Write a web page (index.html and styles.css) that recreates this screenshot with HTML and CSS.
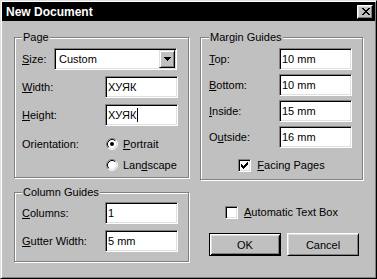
FILE: index.html
```html
<!DOCTYPE html>
<html>
<head>
<meta charset="utf-8">
<link rel="stylesheet" href="styles.css">
</head>
<body>
<div class="window">
  <div class="titlebar">
    <span class="title">New Document</span>
    <span class="close">
      <svg width="8" height="7" viewBox="0 0 8 7" shape-rendering="crispEdges"><path fill="#000" d="M0 0h2v1H0zM6 0h2v1H6zM1 1h2v1H1zM5 1h2v1H5zM2 2h4v1H2zM3 3h2v1H3zM2 4h4v1H2zM1 5h2v1H1zM5 5h2v1H5zM0 6h2v1H0zM6 6h2v1H6z"/></svg>
    </span>
  </div>
  <div class="content">
    <div class="col">
      <fieldset class="group group-left page">
        <legend>Page</legend>
        <div class="row">
          <span class="lbl lbl-size"><u>S</u>ize:</span>
          <div class="select">
            <span class="select-text">Custom</span>
            <span class="select-btn">
              <svg width="7" height="4" viewBox="0 0 7 4" shape-rendering="crispEdges"><path fill="#000" d="M0 0h7v1H0zM1 1h5v1H1zM2 2h3v1H2zM3 3h1v1H3z"/></svg>
            </span>
          </div>
        </div>
        <div class="row">
          <span class="lbl lbl-left"><u>W</u>idth:</span>
          <div class="field">ХУЯК</div>
        </div>
        <div class="row">
          <span class="lbl lbl-left"><u>H</u>eight:</span>
          <div class="field">ХУЯК<span class="caret"></span></div>
        </div>
        <div class="row radio-row first-radio">
          <span class="lbl lbl-left">Orientation:</span>
          <span class="radio">
            <svg width="12" height="12" viewBox="0 0 12 12"><circle cx="6" cy="6" r="4.5" fill="#fff"/><path d="M2.11 9.89A5.5 5.5 0 0 1 9.89 2.11" fill="none" stroke="#808080"/><path d="M9.89 2.11A5.5 5.5 0 0 1 2.11 9.89" fill="none" stroke="#fff"/><path d="M2.82 9.18A4.5 4.5 0 0 1 9.18 2.82" fill="none" stroke="#000"/><path d="M9.18 2.82A4.5 4.5 0 0 1 2.82 9.18" fill="none" stroke="#dfdfdf"/><circle cx="6" cy="6" r="2" fill="#000"/></svg>
          </span>
          <span class="opt"><u>P</u>ortrait</span>
        </div>
        <div class="row radio-row">
          <span class="lbl lbl-left"></span>
          <span class="radio">
            <svg width="12" height="12" viewBox="0 0 12 12"><circle cx="6" cy="6" r="4.5" fill="#fff"/><path d="M2.11 9.89A5.5 5.5 0 0 1 9.89 2.11" fill="none" stroke="#808080"/><path d="M9.89 2.11A5.5 5.5 0 0 1 2.11 9.89" fill="none" stroke="#fff"/><path d="M2.82 9.18A4.5 4.5 0 0 1 9.18 2.82" fill="none" stroke="#000"/><path d="M9.18 2.82A4.5 4.5 0 0 1 2.82 9.18" fill="none" stroke="#dfdfdf"/></svg>
          </span>
          <span class="opt">Lan<u>d</u>scape</span>
        </div>
      </fieldset>
      <fieldset class="group group-left cols">
        <legend>Column Guides</legend>
        <div class="row">
          <span class="lbl lbl-left"><u>C</u>olumns:</span>
          <div class="field">1</div>
        </div>
        <div class="row">
          <span class="lbl lbl-left"><u>G</u>utter Width:</span>
          <div class="field">5 mm</div>
        </div>
      </fieldset>
    </div>
    <div class="col">
      <fieldset class="group group-right margins">
        <legend>Margin Guides</legend>
        <div class="row">
          <span class="lbl lbl-right"><u>T</u>op:</span>
          <div class="field">10 mm</div>
        </div>
        <div class="row">
          <span class="lbl lbl-right"><u>B</u>ottom:</span>
          <div class="field">10 mm</div>
        </div>
        <div class="row">
          <span class="lbl lbl-right"><u>I</u>nside:</span>
          <div class="field">15 mm</div>
        </div>
        <div class="row">
          <span class="lbl lbl-right">O<u>u</u>tside:</span>
          <div class="field">16 mm</div>
        </div>
        <div class="check-row facing">
          <span class="checkbox">
            <svg width="7" height="7" viewBox="0 0 7 7" shape-rendering="crispEdges"><path fill="#000" d="M6 0h1v1H6zM5 1h2v1H5zM0 2h1v1H0zM4 2h3v1H4zM0 3h2v1H0zM3 3h3v1H3zM0 4h5v1H0zM1 5h3v1H1zM2 6h1v1H2z"/></svg>
          </span>
          <span class="opt"><u>F</u>acing Pages</span>
        </div>
      </fieldset>
      <div class="check-row auto">
        <span class="checkbox"></span>
        <span class="opt"><u>A</u>utomatic Text Box</span>
      </div>
      <div class="buttons">
        <span class="btn btn-default">OK</span>
        <span class="btn">Cancel</span>
      </div>
    </div>
  </div>
</div>
</body>
</html>
```
FILE: styles.css
```css
* {
  box-sizing: border-box;
}

html,
body {
  margin: 0;
  padding: 0;
}

body {
  background: #c0c0c0;
  font-family: "Liberation Sans", Arial, sans-serif;
  font-size: 11px;
  color: #000;
}

u {
  text-decoration: underline;
  text-underline-offset: 1px;
}

.window {
  width: 377px;
  height: 279px;
  background: #c0c0c0;
  border: 1px solid;
  border-color: #dfdfdf #000 #000 #dfdfdf;
  box-shadow: inset 1px 1px #fff, inset -1px -1px #808080;
  padding: 1px;
  display: flex;
  flex-direction: column;
}

.titlebar {
  height: 19px;
  background: #000;
  display: flex;
  align-items: center;
  justify-content: space-between;
  padding: 0 2px 0 4px;
}

.title {
  color: #fff;
  font-weight: bold;
  font-size: 12px;
  line-height: 14px;
}

.close {
  width: 16px;
  height: 14px;
  background: #c0c0c0;
  border: 1px solid;
  border-color: #fff #000 #000 #fff;
  box-shadow: inset -1px -1px #808080, inset 1px 1px #dfdfdf;
  display: flex;
  align-items: center;
  justify-content: center;
  padding-left: 1px;
}

.close svg {
  display: block;
}

.content {
  display: grid;
  grid-template-columns: 175px 163px;
  column-gap: 11px;
  padding: 10px 0 0 12px;
}

.col {
  display: flex;
  flex-direction: column;
}

.group {
  margin: 0;
  min-width: 0;
  border: 1px solid #808080;
  box-shadow: inset 1px 1px #fff, 1px 1px #fff;
}

.group legend {
  padding: 0 1px;
  line-height: 13px;
  background: #c0c0c0;
}

.group-left {
  padding: 4px 0 0 7px;
}

.group-right {
  padding: 4px 0 0 8px;
}

.page {
  padding-bottom: 4px;
}

.cols {
  margin-top: 8px;
  padding-top: 3px;
  padding-bottom: 9px;
}

.margins {
  padding-bottom: 7px;
}

.row {
  display: flex;
  align-items: center;
  height: 22px;
}

.row + .row {
  margin-top: 6px;
}

.margins .row + .row {
  margin-top: 4px;
}

.lbl {
  flex: none;
  white-space: nowrap;
}

.lbl-size {
  width: 32px;
}

.lbl-left {
  width: 83px;
}

.lbl-right {
  width: 70px;
}

.field {
  width: 73px;
  height: 22px;
  background: #fff;
  border: 1px solid;
  border-color: #808080 #fff #fff #808080;
  box-shadow: inset 1px 1px #000, inset -1px -1px #dfdfdf;
  padding: 0 2px;
  display: flex;
  align-items: center;
  white-space: nowrap;
}

.caret {
  display: inline-block;
  width: 1px;
  height: 14px;
  background: #000;
  margin-left: 1px;
}

.select {
  width: 123px;
  height: 22px;
  background: #fff;
  border: 1px solid;
  border-color: #808080 #fff #fff #808080;
  box-shadow: inset 1px 1px #000, inset -1px -1px #dfdfdf;
  padding: 1px 1px 1px 1px;
  display: flex;
  align-items: center;
}

.select-text {
  flex: 1;
  padding-left: 3px;
}

.select-btn {
  width: 16px;
  height: 18px;
  background: #c0c0c0;
  border: 1px solid;
  border-color: #dfdfdf #000 #000 #dfdfdf;
  box-shadow: inset 1px 1px #fff, inset -1px -1px #808080;
  display: flex;
  align-items: center;
  justify-content: center;
}

.select-btn svg {
  display: block;
}

.radio-row {
  height: 16px;
}

.row.first-radio {
  margin-top: 10px;
}

.radio-row + .radio-row {
  margin-top: 5px;
}

.radio {
  width: 12px;
  height: 12px;
  flex: none;
  margin-left: 1px;
  margin-right: 5px;
}

.radio svg {
  display: block;
}

.check-row {
  display: flex;
  align-items: center;
  justify-content: center;
  height: 14px;
}

.facing {
  margin-top: 10px;
  margin-left: -8px;
}

.auto {
  margin-top: 25px;
}

.checkbox {
  width: 13px;
  height: 13px;
  flex: none;
  background: #fff;
  border: 1px solid;
  border-color: #808080 #fff #fff #808080;
  box-shadow: inset 1px 1px #000, inset -1px -1px #dfdfdf;
  display: flex;
  align-items: center;
  justify-content: center;
  margin-right: 6px;
}

.checkbox svg {
  display: block;
}

.buttons {
  display: flex;
  gap: 6px;
  margin-top: 14px;
  padding-left: 9px;
}

.btn {
  width: 72px;
  height: 23px;
  display: flex;
  align-items: center;
  justify-content: center;
  border: 1px solid;
  border-color: #fff #000 #000 #fff;
  box-shadow: inset 1px 1px #dfdfdf, inset -1px -1px #808080;
}

.btn-default {
  border-color: #000;
  box-shadow: inset 1px 1px #fff, inset -1px -1px #000, inset 2px 2px #dfdfdf, inset -2px -2px #808080;
}
```
